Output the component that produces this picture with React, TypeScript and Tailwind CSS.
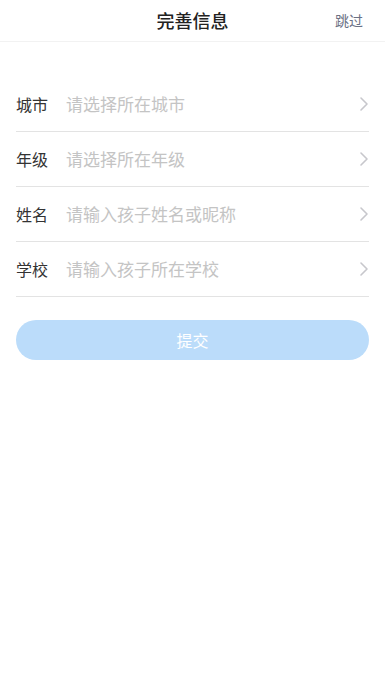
import React from 'react';

const rows = [
  { label: '城市', placeholder: '请选择所在城市' },
  { label: '年级', placeholder: '请选择所在年级' },
  { label: '姓名', placeholder: '请输入孩子姓名或昵称' },
  { label: '学校', placeholder: '请输入孩子所在学校' },
];

const Chevron = () => (
  <svg width="10" height="16" viewBox="0 0 10 16" fill="none">
    <path d="M2 2l6 6-6 6" stroke="#c7c7cc" strokeWidth="1.6" strokeLinecap="round" strokeLinejoin="round" />
  </svg>
);

export default function App() {
  return (
    <div
      className="w-[385px] h-[700px] bg-white"
      style={{ fontFamily: '"Noto Sans CJK SC", "Noto Sans", sans-serif' }}
    >
      {/* Header */}
      <div className="relative h-[42px] flex items-center justify-center border-b border-[#f2f2f2]">
        <h1 className="text-[18px] font-medium text-[#222]">完善信息</h1>
        <span className="absolute right-[22px] text-[14px] text-[#6b7185]">跳过</span>
      </div>

      {/* Form */}
      <div className="mt-[35px] px-4">
        {rows.map((row) => (
          <div key={row.label} className="h-[55px] flex items-center border-b border-[#e3e3e3]">
            <span className="w-[50px] text-[16px] text-[#333]">{row.label}</span>
            <span className="flex-1 text-[17px] text-[#c4c4c4]">{row.placeholder}</span>
            <span className="flex items-center">
              <Chevron />
            </span>
          </div>
        ))}
      </div>

      <div className="px-4 mt-[23px]">
        <button className="w-full h-[40px] rounded-full bg-[#bbdcfa] text-white text-[16px]">
          提交
        </button>
      </div>
    </div>
  );
}
